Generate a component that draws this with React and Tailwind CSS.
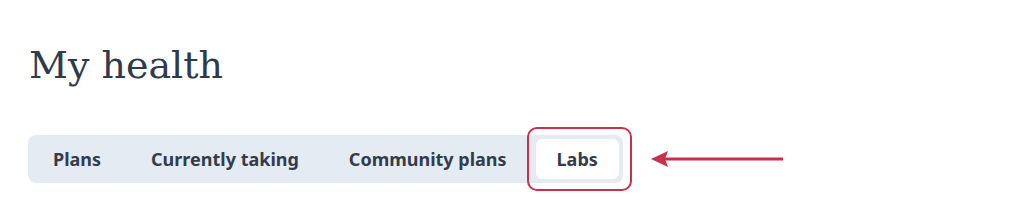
import React from "react";

const tabs = ["Plans", "Currently taking", "Community plans", "Labs"];

export default function App() {
  const active = "Labs";

  return (
    <div className="w-[1024px] h-[205px] bg-white overflow-hidden">
      <div className="pl-[29px] pt-[41px]">
        <h1 className="text-[38px] leading-[48px] text-[#2f3b4b] font-normal font-['DejaVu_Serif',serif]">
          My health
        </h1>

        <div className="flex items-center mt-[46px]">
          {/* Tab bar */}
          <div className="flex items-center gap-2 p-1 -ml-px rounded-lg bg-[#e5ebf3] font-['Noto_Sans',sans-serif]">
            {tabs.map((t) => {
              const isActive = t === active;
              return (
                <div key={t} className="relative">
                  <button
                    className={
                      isActive
                        ? "h-10 px-[21px] rounded-md bg-white text-[18px] font-bold text-[#323c4b]"
                        : "h-10 px-[21px] rounded-md text-[18px] font-bold text-[#323c4b]"
                    }
                  >
                    {t}
                  </button>
                  {isActive && (
                    <span className="absolute -left-[9px] -right-[13px] -top-[12px] -bottom-[12px] rounded-[10px] border-[2.5px] border-[#c8314c] pointer-events-none" />
                  )}
                </div>
              );
            })}
          </div>

          {/* Arrow pointing at the highlighted tab */}
          <svg width="134" height="20" viewBox="0 0 134 20" className="ml-[28px]">
            <line x1="14" y1="10" x2="132" y2="10" stroke="#c8314c" strokeWidth="3" />
            <path d="M0 10 L17 2 L14 10 L17 18 Z" fill="#c8314c" />
          </svg>
        </div>
      </div>
    </div>
  );
}
